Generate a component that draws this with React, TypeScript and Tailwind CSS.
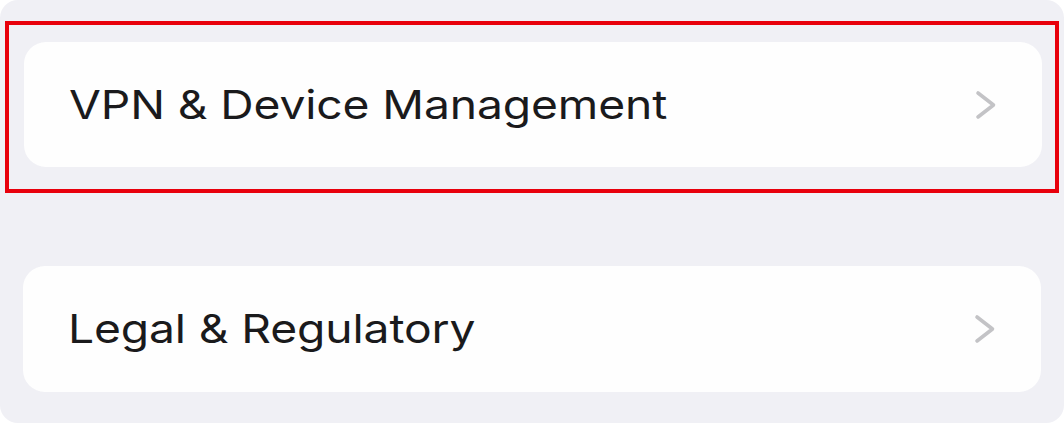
import React from "react";

function Chevron() {
  return (
    <svg width="22" height="30" viewBox="0 0 22 30" fill="none" className="shrink-0">
      <path d="M3 3 L18.5 15 L3 27" stroke="#c3c3c6" strokeWidth="3.6" strokeLinecap="round" strokeLinejoin="round" />
    </svg>
  );
}

function Row({ label }: { label: string }) {
  return (
    <div className="flex h-full items-center justify-between rounded-[22px] bg-[#fefefe] pl-[45px] pr-[45px]">
      <span
        className="origin-left scale-x-[1.155] text-[#1a1a1c] text-[40px] leading-none tracking-[-0.1px]"
        style={{ fontFamily: "Inter, 'Liberation Sans', sans-serif" }}
      >
        {label}
      </span>
      <Chevron />
    </div>
  );
}

export default function App() {
  return (
    <div className="w-[1064px] h-[423px] bg-white">
      <div className="flex h-full w-full flex-col rounded-[18px] bg-[#f0f0f5] pt-[21px]">
        <div className="mx-[5px] border-[4px] border-[#e8000c] pl-[15px] pr-[13px] pt-[17px] pb-[22px]">
          <div className="h-[125px]">
            <Row label="VPN & Device Management" />
          </div>
        </div>
        <div className="mx-[23px] mt-[73px] h-[126px]">
          <Row label="Legal & Regulatory" />
        </div>
      </div>
    </div>
  );
}
